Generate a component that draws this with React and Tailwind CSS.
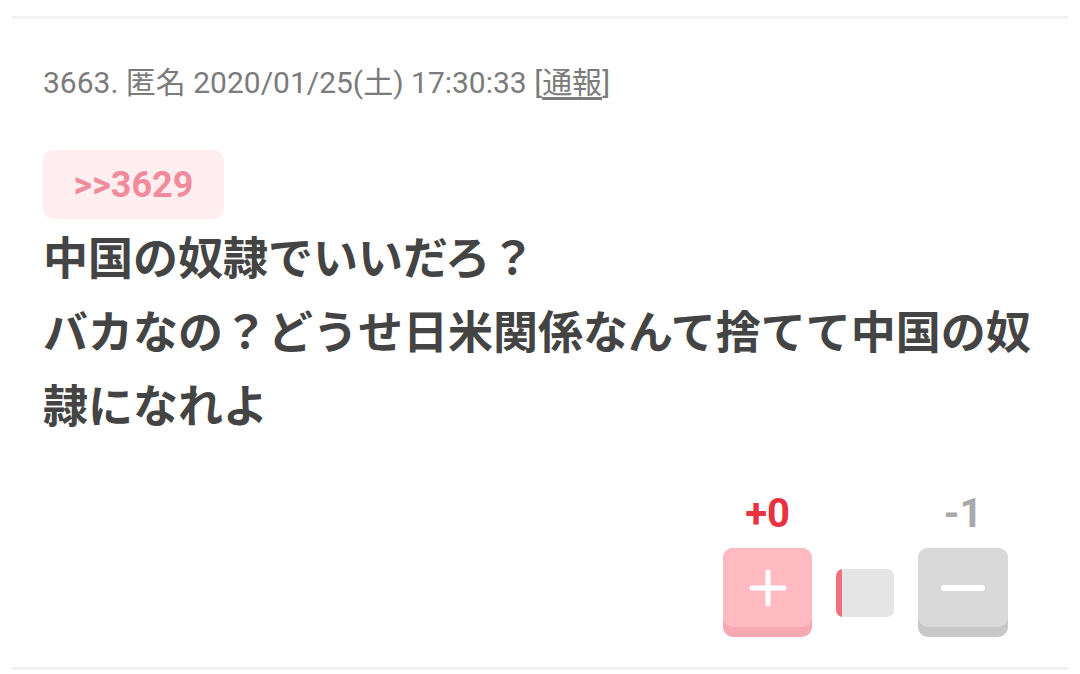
export default function App() {
  const jp = { fontFamily: '"Noto Sans CJK JP", sans-serif' };
  return (
    <div className="w-[1080px] h-[674px] bg-white overflow-hidden" style={{ fontFamily: 'Roboto, "Noto Sans CJK JP", sans-serif' }}>
      <div className="mx-[11px] mt-[16px] h-[3px] rounded-full bg-[#f1f1f1]" />

      <div className="px-[43px]">
        {/* meta */}
        <div className="mt-[45px] h-[36px] flex items-center text-[30px] text-[#7b7b7b]">
          <span>3663. 匿名 2020/01/25(土) 17:30:33 [<span className="underline underline-offset-4">通報</span>]</span>
        </div>

        {/* reply anchor */}
        <div className="mt-[50px] w-[181px] h-[69px] rounded-[10px] bg-[#ffeef0] flex items-center justify-center">
          <span className="text-[36px] font-bold text-[#f08a9c]">&gt;&gt;3629</span>
        </div>

        {/* body */}
        <p className="mt-0 text-[45px] font-bold leading-[74px] text-[#444444] whitespace-nowrap" style={jp}>
          中国の奴隷でいいだろ？
          <br />
          バカなの？どうせ日米関係なんて捨てて中国の奴
          <br />
          隷になれよ
        </p>

        {/* votes */}
        <div className="mt-[53px] flex justify-end items-end pr-[29px]">
          <div className="flex flex-col items-center">
            <span className="text-[40px] font-bold leading-[40px] text-[#e8323f]">+0</span>
            <button className="mt-[14px] w-[89px] h-[89px] rounded-[10px] bg-[#f7a9b3] pb-[10px] flex">
              <span className="flex-1 rounded-[10px] bg-[#ffbac2] flex items-center justify-center">
                <svg width="44" height="44" viewBox="0 0 44 44">
                  <path d="M22 6v32M6 22h32" stroke="#fff" strokeWidth="5" strokeLinecap="round" />
                </svg>
              </span>
            </button>
          </div>

          <div className="mx-[24px] mb-[20px] w-[58px] h-[48px] rounded-[7px] bg-[#e5e5e5] overflow-hidden flex">
            <div className="w-[6px] bg-[#f2707e]" />
          </div>

          <div className="flex flex-col items-center">
            <span className="text-[40px] font-bold leading-[40px] text-[#a9a9a9]">-1</span>
            <button className="mt-[14px] w-[90px] h-[89px] rounded-[10px] bg-[#c8c8c8] pb-[10px] flex">
              <span className="flex-1 rounded-[10px] bg-[#d9d9d9] flex items-center justify-center">
                <svg width="44" height="44" viewBox="0 0 44 44">
                  <path d="M3 22h38" stroke="#fff" strokeWidth="6" strokeLinecap="round" />
                </svg>
              </span>
            </button>
          </div>
        </div>
      </div>

      <div className="mx-[11px] mt-[30px] h-[3px] rounded-full bg-[#f1f1f1]" />
    </div>
  );
}
